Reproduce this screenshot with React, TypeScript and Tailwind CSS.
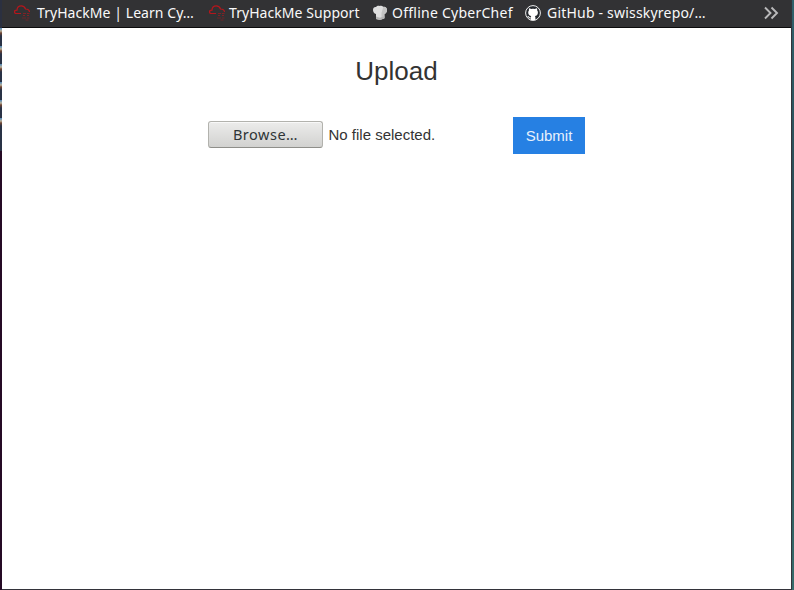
function CloudIcon() {
  return (
    <svg className="h-4 w-[18px] shrink-0" viewBox="0 0 18 16" fill="none" stroke="#b5161c">
      <path d="M8 8.5H3.5C2 8.5 1.5 7.8 1.5 6.9S2.2 5.2 4 5.2C4.1 2.2 5.8.9 8.2.9c2.1 0 3.7 1.1 4.3 3.1 2.2-.1 4 1 4 3" strokeWidth="1.2" />
      <path d="M10 8.5h3m1 0h2.5M10 10.5h2m2 0h2" strokeWidth="1" opacity=".6" />
      <path d="M9 13h4m1 0h2.5M12.5 15h3" strokeWidth="1" opacity=".45" />
    </svg>
  );
}

function ChefIcon() {
  return (
    <svg className="h-4 w-4 shrink-0" viewBox="0 0 16 16">
      <path d="M4 9C2 8.6 1 7 1 5.1c0-2 1.2-3.3 3-3.1C4.8 1 6.3.5 7.7 1c1.4-.5 2.8-.2 3.6.9 2.3-.3 3.7 1.1 3.7 3.1S14 8.6 12.4 9v4.2L8 15l-4-1z" fill="#dedede" />
      <path d="M11.3 1.9c2.3-.3 3.7 1.1 3.7 3.1S14 8.6 12.4 9v4.2L9.5 14.4V8z" fill="#c4c4c4" />
      <path d="M4 11.5 8 12.7l4.4-1.4v1.9L8 15l-4-1z" fill="#b5b5b5" />
    </svg>
  );
}

function GithubIcon() {
  return (
    <svg className="h-4 w-4 shrink-0" viewBox="0 0 16 16">
      <circle cx="8" cy="8" r="7.4" fill="#25292e" stroke="#f2f2f2" strokeWidth="1" />
      <path d="M4 3.2c.7 0 1.5.4 2.1.8a8 8 0 0 1 3.8 0c.7-.4 1.4-.8 2.1-.8.3.8.3 1.4.1 2 .6.6.8 1.4.8 2.2 0 2.2-1.2 3.2-3 3.5.4.4.5.8.5 1.5v2.8H5.7v-2c-1.6.3-2.1-.5-2.6-1.2-.3-.4-.5-.6-.9-.8 1.1-.4 1.7.4 2.1.9.4.5.9.5 1.5.3 0-.6.2-1 .5-1.4-1.8-.3-3.1-1.3-3.1-3.6 0-.9.3-1.6.8-2.2-.2-.6-.2-1.3 0-2z" fill="#fff" />
    </svg>
  );
}

export default function App() {
  return (
    <div className="flex h-[590px] w-[794px] overflow-hidden bg-[#2f3541] font-['Liberation_Sans',Arial,sans-serif]">
      <div className="flex w-[2px] shrink-0 flex-col">
        <div className="h-[28px] bg-[#2b3040]" />
        <div className="h-[108px] bg-[repeating-linear-gradient(to_bottom,#4d86b8_0px,#b9b29c_3px,#714634_5px,#293246_8px,#293246_18px)]" />
        <div className="h-[15px] bg-[#293246]" />
        <div className="flex-1 bg-[#250a25]" />
      </div>
      <main className="flex w-[789px] shrink-0 flex-col border-b border-[#33333a] bg-white">
        <nav className="flex h-[28px] shrink-0 items-center border-b border-[#0c0c0d] bg-[#323234] pr-[12px] pb-[2px] pl-[11px] font-['Noto_Sans',sans-serif] text-[14px] leading-[25px] whitespace-nowrap text-[#f9f9fa]">
          <div className="flex w-[195px] shrink-0 items-center gap-[6px]">
            <CloudIcon />
            <span className="tracking-[0.06px]">TryHackMe | Learn Cy…</span>
          </div>
          <div className="flex w-[164px] shrink-0 items-center gap-[3px]">
            <CloudIcon />
            <span className="tracking-[0.06px]">TryHackMe Support</span>
          </div>
          <div className="flex w-[153px] shrink-0 items-center gap-[4px]">
            <ChefIcon />
            <span className="tracking-[0.25px]">Offline CyberChef</span>
          </div>
          <div className="flex shrink-0 items-center gap-[6px]">
            <GithubIcon />
            <span className="tracking-[0.2px]">GitHub - swisskyrepo/…</span>
          </div>
          <svg className="ml-auto h-4 w-4 shrink-0" viewBox="0 0 16 16" fill="none" stroke="#b9b9ba" strokeWidth="1.9">
            <path d="m2 2.5 5.5 5.5L2 13.5M8.5 2.5 14 8l-5.5 5.5" />
          </svg>
        </nav>
        <h1 className="mt-[27px] text-center text-[26px] leading-[32px] text-[#333]">Upload</h1>
        <form className="mt-[30px] flex items-start pl-[206px]" onSubmit={(event) => event.preventDefault()}>
          <button type="button" className="mt-[4px] h-[27px] w-[115px] rounded-[3px] border border-[#b2b2ad] border-b-[#8f8f8a] bg-linear-to-b from-[#ececeb] to-[#d2d2d0] font-['Noto_Sans',sans-serif] text-[14.5px] leading-[25px] tracking-[0.5px] text-[#2e3436] shadow-[inset_0_1px_0_#f8f8f8]">Browse…</button>
          <span className="mt-[4px] ml-[5.5px] w-[184.5px] text-[15px] leading-[27px] text-[#333]">No file selected.</span>
          <button type="submit" className="h-[37px] w-[72px] bg-[#2680e3] text-[15px] leading-[37px] text-[#e8f1fc]">Submit</button>
        </form>
      </main>
      <div className="w-px bg-[#33333a]" />
      <div className="w-[2px] bg-linear-to-b from-[#30616b] via-[#28434d] to-[#366c6c]" />
    </div>
  );
}
